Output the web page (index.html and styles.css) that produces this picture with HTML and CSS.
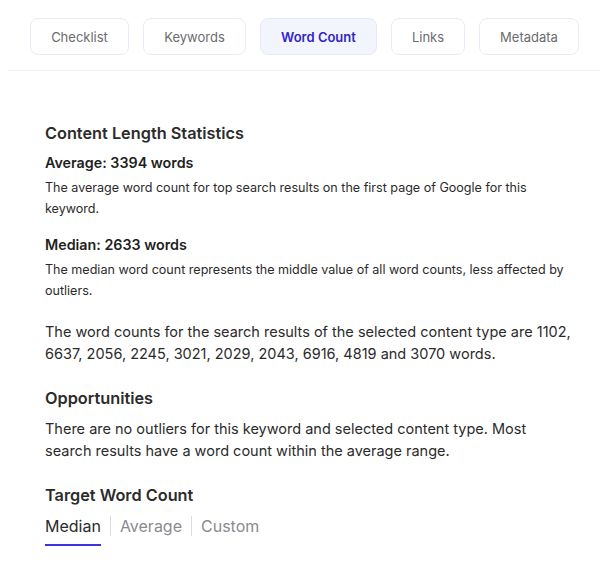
FILE: index.html
```html
<!DOCTYPE html>
<html>
<head>
<meta charset="utf-8">
<link rel="stylesheet" href="styles.css">
</head>
<body>
<nav class="tabs">
  <div class="tab">Checklist</div>
  <div class="tab">Keywords</div>
  <div class="tab active">Word Count</div>
  <div class="tab">Links</div>
  <div class="tab">Metadata</div>
</nav>
<main class="content">
  <h2 class="title">Content Length Statistics</h2>
  <h3 class="stat">Average: 3394 words</h3>
  <p class="small">The average word count for top search results on the first page of Google for this keyword.</p>
  <h3 class="stat stat-gap">Median: 2633 words</h3>
  <p class="small">The median word count represents the middle value of all word counts, less affected by outliers.</p>
  <p class="large counts">The word counts for the search results of the selected content type are 1102, 6637, 2056, 2245, 3021, 2029, 2043, 6916, 4819 and 3070 words.</p>
  <h2 class="title section">Opportunities</h2>
  <p class="large">There are no outliers for this keyword and selected content type. Most search results have a word count within the average range.</p>
  <h2 class="title section">Target Word Count</h2>
  <div class="switch">
    <span class="opt selected">Median</span>
    <span class="sep"></span>
    <span class="opt">Average</span>
    <span class="sep"></span>
    <span class="opt">Custom</span>
  </div>
</main>
</body>
</html>
```

FILE: styles.css
```css
* { box-sizing: border-box; }
html, body { margin: 0; padding: 0; background: #fff; }
body {
  font-family: Inter, "Noto Sans", sans-serif;
  color: #2b2b2b;
  width: 606px;
  height: 567px;
  overflow: hidden;
}
.tabs {
  display: flex;
  gap: 14px;
  padding: 18px 0 15px 22px;
  margin: 0 6px 0 8px;
  border-bottom: 1px solid #f0f0f5;
}
.tab {
  height: 37px;
  display: flex;
  align-items: center;
  justify-content: center;
  border: 1px solid #ebebf5;
  border-radius: 8px;
  font-size: 13px;
  color: #6b6b70;
  background: #fff;
}
.tab:nth-child(1) { width: 99px; }
.tab:nth-child(2) { width: 103px; }
.tab:nth-child(3) { width: 117px; }
.tab:nth-child(4) { width: 74px; }
.tab:nth-child(5) { width: 100px; }
.tab.active {
  background: #f3f5fd;
  border-color: #e6e9f7;
  color: #3124c9;
  font-weight: 600;
}
.content {
  padding: 50px 30px 0 45px;
}
.title {
  margin: 0;
  font-size: 16.3px;
  font-weight: 600;
  line-height: 24px;
  color: #2b2b2b;
}
.title.section { margin-top: 21px; }
.title.last { margin-top: 20px; }
.stat {
  margin: 7px 0 0;
  font-size: 14.3px;
  font-weight: 600;
  line-height: 22px;
  color: #1f1f1f;
}
.stat-gap { margin-top: 15px; }
.small {
  margin: 3px 0 0;
  font-size: 12.55px;
  line-height: 21px;
  color: #2b2b2b;
}
.large {
  margin: 8px 0 0;
  font-size: 14.5px;
  line-height: 22px;
  color: #2b2b2b;
}
.counts { margin-top: 20px; }
.switch {
  display: flex;
  align-items: center;
  gap: 9px;
  margin-top: 6px;
}
.opt {
  font-size: 16px;
  line-height: 26px;
  color: #8a8a8f;
  padding-bottom: 5px;
  border-bottom: 2px solid transparent;
}
.opt.selected {
  color: #2b2b2b;
  border-bottom-color: #3b34e0;
}
.sep {
  width: 1px;
  height: 20px;
  background: #dcdce0;
  margin-bottom: 7px;
}
```
